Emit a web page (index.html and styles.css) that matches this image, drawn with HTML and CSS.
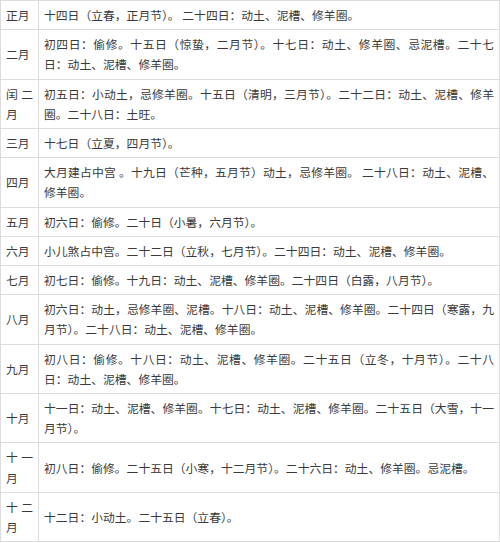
FILE: index.html
```html
<!DOCTYPE html>
<html lang="zh-CN">
<head>
<meta charset="utf-8">
<title>月份宜忌</title>
<link rel="stylesheet" href="styles.css">
</head>
<body>
<table class="almanac">
  <colgroup><col class="c-month"><col class="c-text"></colgroup>
  <tbody>
    <tr><td class="month">正月</td><td>十四日（立春，正月节）。 二十四日：动土、泥槽、修羊圈。</td></tr>
    <tr><td class="month">二月</td><td>初四日：偷修。十五日（惊蛰，二月节）。十七日：动土、修羊圈、忌泥槽。二十七日：动土、泥槽、修羊圈。</td></tr>
    <tr><td class="month">闰二月</td><td>初五日：小动土，忌修羊圈。十五日（清明，三月节）。二十二日：动土、泥槽、修羊圈。二十八日：土旺。</td></tr>
    <tr><td class="month">三月</td><td>十七日（立夏，四月节）。</td></tr>
    <tr><td class="month">四月</td><td>大月建占中宫 。十九日（芒种，五月节）动土，忌修羊圈。 二十八日：动土、泥槽、修羊圈。</td></tr>
    <tr><td class="month">五月</td><td>初六日：偷修。二十日（小暑，六月节）。</td></tr>
    <tr><td class="month">六月</td><td>小儿煞占中宫。二十二日（立秋，七月节）。二十四日：动土、泥槽、修羊圈。</td></tr>
    <tr><td class="month">七月</td><td>初七日：偷修。十九日：动土、泥槽、修羊圈。二十四日（白露，八月节）。</td></tr>
    <tr><td class="month">八月</td><td>初六日：动土，忌修羊圈、泥槽。十八日：动土、泥槽、修羊圈。二十四日（寒露，九月节）。二十八日：动土、泥槽、修羊圈。</td></tr>
    <tr><td class="month">九月</td><td>初八日：偷修。十八日：动土、泥槽、修羊圈。二十五日（立冬，十月节）。二十八日：动土、泥槽、修羊圈。</td></tr>
    <tr><td class="month">十月</td><td>十一日：动土、泥槽、修羊圈。十七日：动土、泥槽、修羊圈。二十五日（大雪，十一月节）。</td></tr>
    <tr><td class="month">十一月</td><td>初八日：偷修。二十五日（小寒，十二月节）。二十六日：动土、修羊圈。忌泥槽。</td></tr>
    <tr><td class="month">十二月</td><td>十二日：小动土。二十五日（立春）。</td></tr>
  </tbody>
</table>
</body>
</html>
```
FILE: styles.css
```css
html, body {
  margin: 0;
  padding: 0;
  background: #fff;
}

.almanac {
  width: 500px;
  table-layout: fixed;
  border-collapse: collapse;
  font-family: "Noto Sans CJK SC", "Noto Sans", sans-serif;
  font-size: 11.8px;
  line-height: 20.2px;
  color: #3a3a3a;
}

.c-month {
  width: 38px;
}

.almanac td {
  border: 1px solid #dcdcdc;
  padding: 4px 5px;
  vertical-align: middle;
  text-align: justify;
  word-break: normal;
}

.almanac td.month {
  padding: 4px 5px;
}
```
